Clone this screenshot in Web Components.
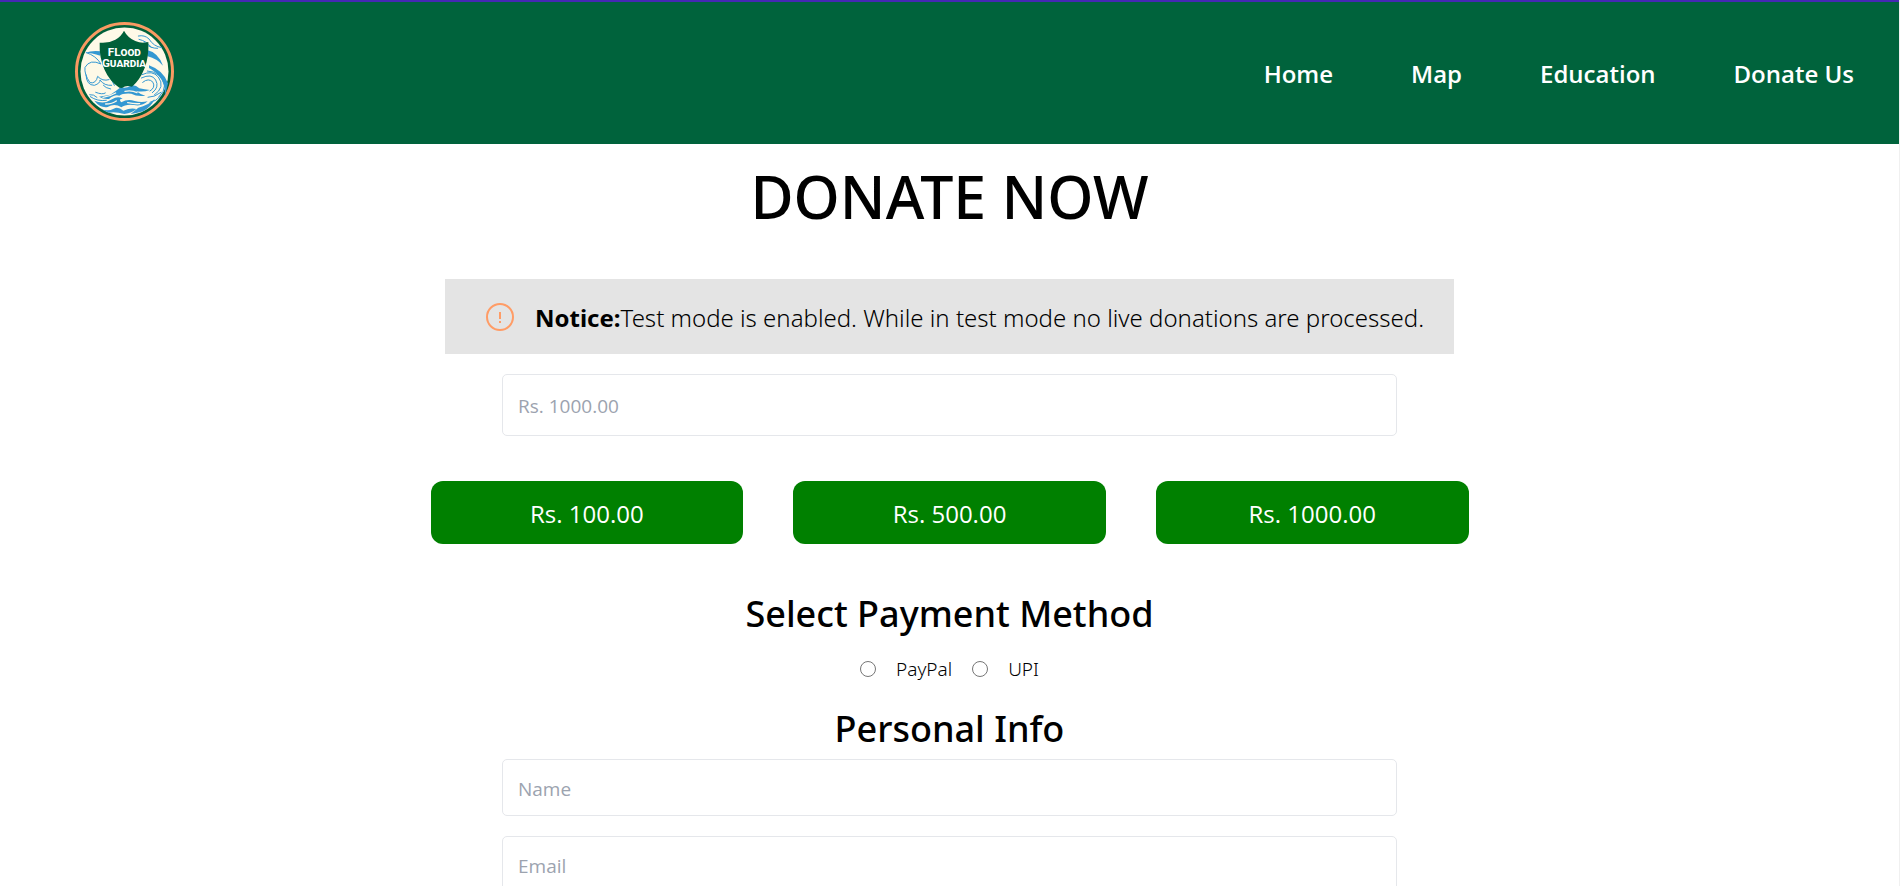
<!DOCTYPE html>
<html lang="en">
<head>
  <meta charset="UTF-8">
  <meta name="viewport" content="width=device-width, initial-scale=1.0">
  <title>Flood Guardia | Donate</title>
  <style>
    body {
      margin: 0;
      border-right: 1px solid #f0f0f0;
      background-color: white;
      color: black;
      font-family: "Segoe UI", "Open Sans", "Noto Sans", sans-serif;
    }
  </style>
</head>
<body>
  <header-nav></header-nav>
  <donate-page></donate-page>

  <script>
    class SiteLogo extends HTMLElement {
      constructor() {
        super();
        this.shadow = this.attachShadow({ mode: 'open' });
      }

      connectedCallback() {
        this.render();
      }

      render() {
        this.shadow.innerHTML = `
            <style>
                :host {
                    display: block;
                    width: 99px;
                    height: 99px;
                }

                svg {
                    display: block;
                    width: 100%;
                    height: 100%;
                }

                text {
                    font-family: Roboto, sans-serif;
                    font-weight: 700;
                    font-variant: small-caps;
                }
            </style>

            <svg viewBox="0 0 297 297" role="img" aria-label="Flood Guardia">
                <circle cx="148.500" cy="148.500" r="144" fill="#006039" stroke="#f99a62" stroke-width="9" />
                <circle cx="148.500" cy="148.500" r="132" fill="#fef9e7" />
                <g fill="#3498d2">
                    <path d="M31 92Q53 84 78 88L76 101Q50 92 31 92Z" />
                    <path d="M214 83Q250 91 264 131Q246 110 218 103Z" />
                    <path d="M222 130Q265 145 279 184L270 222Q273 166 222 138Z" />
                    <path d="M106 218Q123 207 138 195Q151 201 167 191Q180 187 193 199Q209 202 225 204Q200 212 182 206Q196 217 211 221Q185 224 169 215Q143 213 133 221Q119 216 102 231Q84 232 72 224Z" />
                    <path d="M58 236Q88 248 111 232Q128 221 143 230Q129 231 139 241Q158 229 179 237Q198 243 218 238Q201 254 177 249Q151 246 139 256Q119 243 98 255Q76 259 58 236Z" />
                    <path d="M75 260Q99 270 116 260Q129 252 145 266Q168 256 184 261Q172 273 148 276Q122 269 102 272Z" />
                    <path d="M190 257Q219 251 239 231Q229 254 204 268Q183 275 167 276Z" />
                </g>
                <g fill="none" stroke="#3498d2" stroke-width="3" stroke-linecap="round">
                    <path d="M34 92Q63 101 78 126Q45 110 30 136Q27 156 45 182Q63 186 68 163Q82 179 102 173" />
                    <path d="M33 158Q34 190 58 190Q76 184 75 174Q88 192 110 190" />
                    <path d="M44 218Q56 216 66 226M46 224Q67 239 94 235M85 190Q91 198 107 201M107 168L118 190" />
                    <path d="M190 42Q209 38 222 51Q235 73 260 77M207 62Q226 80 248 79M192 52Q215 57 229 76" />
                    <path d="M201 158Q232 143 250 165Q272 195 238 219" />
                    <path d="M199 168Q230 153 242 174Q254 196 232 212" />
                    <path d="M203 181Q221 166 234 181Q242 197 225 207" />
                    <path d="M217 147Q258 149 269 189Q269 209 252 224M226 135Q265 151 274 190" />
                    <path d="M219 226Q239 226 258 211M225 241Q243 239 258 221M62 211Q83 219 91 213" />
                </g>
                <g fill="none" stroke="#fef9e7" stroke-width="4" stroke-linecap="round">
                    <path d="M84 226Q104 224 122 213M150 208Q170 204 186 212M92 246Q112 246 124 237M158 242Q176 246 194 245" />
                </g>
                <path d="M147 26Q158 47 181 57Q200 66 220 60Q222 105 209 138Q195 174 171 194Q154 188 141 198L133 197Q104 178 89 144Q72 106 74 62Q99 65 121 53Q139 43 147 26Z" fill="#006039" />
                <text x="148" y="102" font-size="35" text-anchor="middle" fill="white">FLood</text>
                <text x="147" y="136" font-size="35" text-anchor="middle" fill="white">Guardia</text>
            </svg>
        `;
      }
    }

    class HeaderNav extends HTMLElement {
      constructor() {
        super();
        this.shadow = this.attachShadow({ mode: 'open' });
      }

      connectedCallback() {
        this.render();
      }

      render() {
        this.shadow.innerHTML = `
            <style>
                * {
                    padding: 0;
                    margin: 0;
                    box-sizing: border-box;
                }

                :host {
                    display: block;
                    border-top: 2px solid #4529b4;
                }

                .navbar {
                    display: flex;
                    justify-content: space-between;
                    align-items: center;
                    padding: 20px 45px 23px 75px;
                    background-color: #00633c;
                    color: white;
                }

                .nav-menu {
                    display: flex;
                    gap: 78px;
                    padding-top: 5px;
                    list-style: none;
                }

                a {
                    color: white;
                    font-size: 24px;
                    line-height: 38px;
                    font-weight: 600;
                    text-decoration: none;
                }

                @media (max-width: 992px) {
                    .navbar {
                        padding: 20px;
                    }

                    .nav-menu {
                        gap: 25px;
                    }
                }
            </style>

            <nav class="navbar">
                <site-logo></site-logo>
                <ul class="nav-menu">
                    <li><a href="#home">Home</a></li>
                    <li><a href="#map">Map</a></li>
                    <li><a href="#education">Education</a></li>
                    <li><a href="#donate">Donate Us</a></li>
                </ul>
            </nav>
        `;
      }
    }

    class NoticeBar extends HTMLElement {
      constructor() {
        super();
        this.shadow = this.attachShadow({ mode: 'open' });
      }

      connectedCallback() {
        this.render();
      }

      render() {
        this.shadow.innerHTML = `
            <style>
                :host {
                    display: flex;
                    align-items: center;
                    gap: 20px;
                    box-sizing: border-box;
                    width: 100%;
                    max-width: 1009px;
                    min-height: 75px;
                    padding: 2px 5px 0 40px;
                    background-color: #e4e4e4;
                    font-family: "Segoe UI", "Noto Sans", "Open Sans", sans-serif;
                    font-size: 24px;
                    font-weight: 350;
                    line-height: 35px;
                }

                svg {
                    flex: none;
                    width: 30px;
                    height: 30px;
                }

                p {
                    margin: 0;
                }

                ::slotted(b) {
                    font-weight: 700;
                }
            </style>

            <svg viewBox="0 0 30 30" fill="none" stroke="#ff9c66" stroke-width="2" aria-hidden="true">
                <circle cx="15" cy="14" r="13" />
                <path d="M15 9v7M15 18v2" />
            </svg>
            <p><slot></slot></p>
        `;
      }
    }

    class TextField extends HTMLElement {
      constructor() {
        super();
        this.shadow = this.attachShadow({ mode: 'open' });
      }

      connectedCallback() {
        this.render();
      }

      render() {
        const label = this.getAttribute('label');
        const type = this.getAttribute('type') || 'text';
        const placeholder = this.getAttribute('placeholder') || label;

        this.shadow.innerHTML = `
            <style>
                :host {
                    display: block;
                    width: 100%;
                    max-width: 895px;
                }

                input {
                    display: block;
                    box-sizing: border-box;
                    width: 100%;
                    height: var(--field-height, 57px);
                    padding: 2px 15px 0;
                    border: 1px solid #e5e7eb;
                    border-radius: 5px;
                    background-color: white;
                    font-family: inherit;
                    font-size: 19px;
                }

                input::placeholder {
                    color: #9ca3af;
                }
            </style>

            <input type="${type}" aria-label="${label}" placeholder="${placeholder}">
        `;
      }
    }

    class AmountButton extends HTMLElement {
      constructor() {
        super();
        this.shadow = this.attachShadow({ mode: 'open' });
      }

      connectedCallback() {
        this.render();
      }

      render() {
        this.shadow.innerHTML = `
            <style>
                :host {
                    display: block;
                    flex: 1;
                }

                button {
                    display: block;
                    width: 100%;
                    padding: 15px 10px 13px;
                    border: 0;
                    border-radius: 12px;
                    background-color: green;
                    color: white;
                    font-family: inherit;
                    font-size: 24px;
                    line-height: 35px;
                    cursor: pointer;
                }

                button:hover {
                    opacity: 0.8;
                }
            </style>

            <button type="button"><slot></slot></button>
        `;
      }
    }

    class PaymentMethods extends HTMLElement {
      constructor() {
        super();
        this.shadow = this.attachShadow({ mode: 'open' });
      }

      connectedCallback() {
        this.render();
      }

      render() {
        this.shadow.innerHTML = `
            <style>
                :host {
                    display: flex;
                    justify-content: center;
                    gap: 20px;
                    font-family: "Segoe UI", "Noto Sans", "Open Sans", sans-serif;
                    font-size: 19px;
                    font-weight: 350;
                    line-height: 30px;
                }

                label {
                    display: flex;
                    align-items: center;
                    gap: 20px;
                }

                input {
                    width: 16px;
                    height: 16px;
                    margin: 0;
                }
            </style>

            <label><input type="radio" name="payment" value="paypal">PayPal</label>
            <label><input type="radio" name="payment" value="upi">UPI</label>
        `;
      }
    }

    class DonatePage extends HTMLElement {
      constructor() {
        super();
        this.shadow = this.attachShadow({ mode: 'open' });
      }

      connectedCallback() {
        this.render();
      }

      render() {
        this.shadow.innerHTML = `
            <style>
                :host {
                    display: block;
                }

                main {
                    display: flex;
                    flex-direction: column;
                    align-items: center;
                    padding: 15px 20px;
                }

                h1, h2 {
                    margin: 0;
                    font-family: "Segoe UI", "Noto Sans", "Open Sans", sans-serif;
                    font-weight: 500;
                    text-align: center;
                }

                h1 {
                    margin-bottom: 45px;
                    font-size: 59px;
                    line-height: 75px;
                }

                h2 {
                    font-size: 36px;
                    line-height: 50px;
                }

                .amount {
                    --field-height: 62px;
                    margin: 20px 0 45px;
                }

                .amounts {
                    display: flex;
                    gap: 50px;
                    width: 100%;
                    max-width: 1038px;
                    margin-bottom: 45px;
                }

                payment-methods {
                    margin: 15px 0 20px;
                }

                .fields {
                    display: flex;
                    flex-direction: column;
                    align-items: center;
                    gap: 20px;
                    width: 100%;
                    margin-top: 5px;
                }
            </style>

            <main>
                <h1>DONATE NOW</h1>
                <notice-bar><b>Notice:</b>Test mode is enabled. While in test mode no live donations are processed.</notice-bar>
                <text-field class="amount" label="Amount" placeholder="Rs. 1000.00"></text-field>
                <div class="amounts">
                    <amount-button>Rs. 100.00</amount-button>
                    <amount-button>Rs. 500.00</amount-button>
                    <amount-button>Rs. 1000.00</amount-button>
                </div>
                <h2>Select Payment Method</h2>
                <payment-methods></payment-methods>
                <h2>Personal Info</h2>
                <div class="fields">
                    <text-field label="Name"></text-field>
                    <text-field label="Email" type="email"></text-field>
                </div>
            </main>
        `;
      }
    }

    customElements.define('site-logo', SiteLogo);
    customElements.define('header-nav', HeaderNav);
    customElements.define('notice-bar', NoticeBar);
    customElements.define('text-field', TextField);
    customElements.define('amount-button', AmountButton);
    customElements.define('payment-methods', PaymentMethods);
    customElements.define('donate-page', DonatePage);
  </script>
</body>
</html>
